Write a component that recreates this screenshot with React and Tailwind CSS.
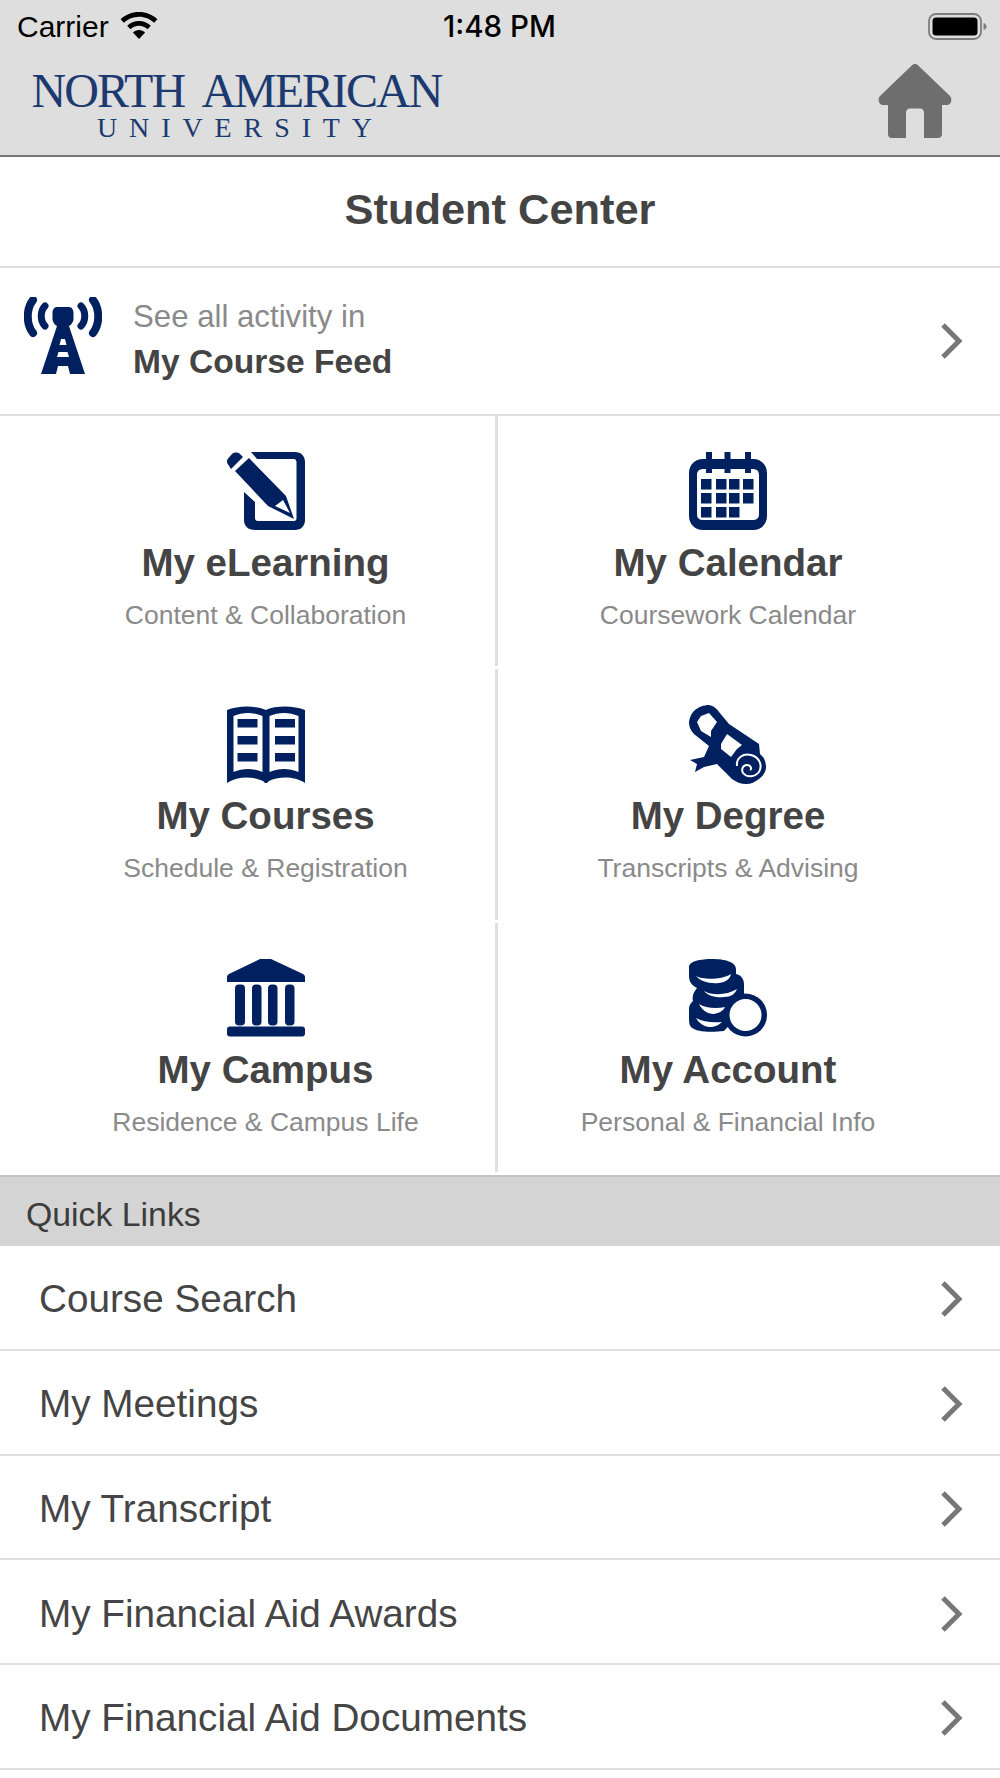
const NAVY = "#00205f";

function Chevron() {
  return (
    <svg width="24" height="38" viewBox="0 0 24 38" className="shrink-0">
      <path d="M4 3 L20 19 L4 35" fill="none" stroke="#777777" strokeWidth="5" strokeLinejoin="miter" />
    </svg>
  );
}

function Wifi() {
  return (
    <svg width="38" height="28" viewBox="0 0 38 28">
      <path d="M19 0C11.800 0 5.400 2.700 0.600 7.200l3.300 3.500C7.900 7 13.200 4.700 19 4.700S30.100 7 34.100 10.700l3.300-3.500C32.600 2.700 26.200 0 19 0Z" fill="#000" />
      <path d="M19 9C14.400 9 10.300 10.800 7.200 13.700l3.300 3.500C12.700 15.100 15.700 13.800 19 13.800s6.300 1.300 8.500 3.400l3.300-3.500C27.700 10.800 23.600 9 19 9Z" fill="#000" />
      <path d="M19 18c-2.300 0-4.500 .9-6.100 2.500L19 27l6.100-6.500C23.500 18.900 21.300 18 19 18Z" fill="#000" />
    </svg>
  );
}

function Battery() {
  return (
    <svg width="59" height="27" viewBox="0 0 59 27">
      <rect x="1" y="1" width="52" height="25" rx="7" fill="none" stroke="#7d7d7d" strokeWidth="1.800" />
      <rect x="4.500" y="4.500" width="45" height="18" rx="3.500" fill="#000" />
      <path d="M55.500 10c2 .5 3 2 3 3.500s-1 3-3 3.500Z" fill="#7d7d7d" />
    </svg>
  );
}

function Home() {
  return (
    <svg width="74" height="74" viewBox="0 0 74 74">
      <path d="M37 0 C38.500 0 39.500 .7 40.500 1.700 L72 32 C74.500 34.500 73.500 41 69 41 H64 V70 C64 72.500 62.500 74 60 74 H46 V49 C46 46 44.500 44.500 42 44.500 H32 C29.500 44.500 28 46 28 49 V74 H14 C11.500 74 10 72.500 10 70 V41 H5 C.5 41 -.5 34.500 2 32 L33.500 1.700 C34.500 .7 35.500 0 37 0 Z" fill="#6e6e6e" />
    </svg>
  );
}

function Tower() {
  return (
    <svg width="78" height="78" viewBox="0 0 78 78" fill={NAVY}>
      <path d="M33 10H45C48 10 49.500 13 49.500 16V22C49.500 25 47 28 45 29L61 77H46L44 69H34L32 77H17L33 29C31 28 28.500 25 28.500 22V16C28.500 13 30 10 33 10Z" />
      <path d="M37 42h4l1.500 6h-7Z" fill="#fff" />
      <path d="M34.500 55h9l1.500 5H33Z" fill="#fff" />
      <g fill="none" stroke={NAVY} strokeLinecap="round">
        <path d="M9 3C2 12 2 27 9 36" strokeWidth="8" />
        <path d="M69 3C76 12 76 27 69 36" strokeWidth="8" />
        <path d="M21 9C16 14 16 24 21 29" strokeWidth="7" />
        <path d="M57 9C62 14 62 24 57 29" strokeWidth="7" />
      </g>
    </svg>
  );
}

function Pencil() {
  return (
    <svg width="78" height="78" viewBox="0 0 78 78" fill={NAVY}>
      <path d="M24 0H68C74 0 78 4 78 10V68C78 74 74 78 68 78H28C21 78 17 74 17 68V40L28 50V66C28 68 29 69 31 69H67C68.500 69 69.500 68 69.500 66.500V10C69.500 8.500 68.500 7 67 7H30Z" />
      <path d="M1.500 6 L5 2 C7 0 11 0 13 2 L16 5 L4 17 L1.500 13 C-0.500 11 -0.500 8 1.500 6 Z" />
      <path d="M22 6 L59 44 L67 67 L41 54 L8 19 Z" />
      <path d="M56 48 L48 54 L63 61 Z" fill="#fff" />
    </svg>
  );
}

function Calendar() {
  const cells = [];
  const xs = [12, 27, 40, 54];
  const ys = [27, 41, 55];
  ys.forEach((y, r) =>
    xs.forEach((x, c) => {
      if (r === 2 && c === 3) return;
      cells.push(<rect key={`${r}-${c}`} x={x} y={y} width="10.500" height="10.500" />);
    })
  );
  return (
    <svg width="78" height="78" viewBox="0 0 78 78" fill={NAVY}>
      <path fillRule="evenodd" d="M14 7H64C72 7 78 13 78 21V64C78 72 72 78 64 78H14C6 78 0 72 0 64V21C0 13 6 7 14 7ZM15 17C10 17 8 19 8 23V62C8 66 10 68 15 68H63C68 68 70 66 70 62V23C70 19 68 17 63 17Z" />
      <rect x="17" y="0" width="6" height="21" />
      <rect x="35.500" y="0" width="6" height="21" />
      <rect x="56" y="0" width="6" height="21" />
      {cells}
    </svg>
  );
}

function Book() {
  return (
    <svg width="78" height="78" viewBox="0 0 78 78" fill={NAVY}>
      <path fillRule="evenodd" d="M0 5C10 1 28 0 39 5C50 0 68 1 78 5V78C66 70 50 72 42 76L40 78H38L36 76C28 72 12 70 0 78ZM6.500 11V67C16 63 26 63 35.500 67V11C26 7 16 7 6.500 11ZM42.500 11V67C52 63 62 63 71.500 67V11C62 7 52 7 42.500 11Z" />
      <rect x="10.500" y="14" width="20" height="8.500" />
      <rect x="10.500" y="31" width="20" height="8.500" />
      <rect x="10.500" y="48" width="20" height="8.500" />
      <rect x="48" y="14" width="20" height="8.500" />
      <rect x="48" y="31" width="20" height="8.500" />
      <rect x="48" y="48" width="20" height="8.500" />
    </svg>
  );
}

function Scroll() {
  return (
    <svg width="78" height="80" viewBox="0 0 78 80" fill={NAVY}>
      <path fillRule="evenodd" d="M0 17C1 11 3 8 5 6C9 2 15 0 20 0C25 1 28 4 30 7L40 19L70 39L71 49C75 52 77 57 77 62C77 67 74 71 70 74C66 77 62 79 57 79C52 79 47 77 43 74L28 59L15 62L6 67L8 59L1 55L15 52L20 41L5 29C1 25 0 21 0 17ZM12 11L20 8L28 17L22 26V32L12 26L8 17ZM38 29L53 40L48 44L42 52L32 44V39Z" />
      <path d="M48 61C47 53 54 48 62 50C70 52 74 60 70 67C66 72 58 73 54 68C52 64 54 60 58 60C62 60 63 64 61 65" fill="none" stroke="#fff" strokeWidth="2" />
    </svg>
  );
}

function Museum() {
  return (
    <svg width="78" height="78" viewBox="0 0 78 78" fill={NAVY}>
      <path d="M33 0H44L76 15C77.500 16 78 17 78 18V23H0V18C0 17 .5 16 2 15Z" />
      <rect x="8" y="25.500" width="10" height="41" rx="4" />
      <rect x="25" y="25.500" width="9.500" height="41" rx="4" />
      <rect x="41" y="25.500" width="9.500" height="41" rx="4" />
      <rect x="58" y="25.500" width="9.500" height="41" rx="4" />
      <rect x="0" y="67.500" width="78" height="10" rx="3" />
    </svg>
  );
}

function Coins() {
  return (
    <svg width="78" height="78" viewBox="0 0 78 78" fill={NAVY}>
      <path d="M0 8C0 2 12 0 23 0C36 0 47 3 47 10V15C52 16 55 20 55 25V50L35 72C25 73 8 74 2 68C0 66 0 62 0 58V50C0 46 2 44 4 42C3 38 4 34 8 29C2 26 0 22 0 17Z" />
      <path d="M7 17C14 21 32 21 42 15C41 20 37 23 30 24C20 25 11 22 7 17Z" fill="#fff" />
      <path d="M15 32C24 37 38 36 48 30C46 35 42 38 35 38C27 39 19 37 15 32Z" fill="#fff" />
      <path d="M10 45C16 49 27 50 36 48C34 52 30 54 25 55C18 55 13 51 10 45Z" fill="#fff" />
      <path d="M7 59C14 63 24 64 33 63C30 66 26 68 20 68C14 67 10 64 7 59Z" fill="#fff" />
      <circle cx="56.500" cy="56" r="21.500" />
      <circle cx="56.500" cy="56" r="16" fill="#fff" />
    </svg>
  );
}

function Tile({ icon, title, sub, right, height }) {
  return (
    <div className={`flex ${height}`}>
      <div className={`flex flex-col items-center flex-1 ${right ? "pr-[42px]" : "pl-[36px]"}`}>
        <div className="pt-[36px] h-[114px]">{icon}</div>
        <div className="mt-[11px] text-[38.500px] leading-[44px] font-bold text-[#444444] whitespace-nowrap">{title}</div>
        <div className="mt-[15px] text-[26.500px] leading-[30px] text-[#8a8a8a] whitespace-nowrap">{sub}</div>
      </div>
      {right ? null : <div className="w-[3px] mb-[3px] bg-[#e0e0e0]" />}
    </div>
  );
}

function LinkRow({ label }) {
  return (
    <div className="flex items-center justify-between h-[104.750px] pt-[4px] pl-[39px] pr-[37px] border-b-2 border-[#dfdfdf]">
      <span className="text-[38.700px] text-[#454545]">{label}</span>
      <Chevron />
    </div>
  );
}

export default function App() {
  return (
    <div className="w-[1000px] h-[1778px] overflow-hidden bg-white" style={{ fontFamily: '"Liberation Sans", Arial, sans-serif' }}>
      <div className="h-[157px] bg-[#dedede] border-b-2 border-[#777777]">
        <div className="relative flex items-center justify-between h-[50px] pt-[2px] pl-[17px] pr-[13px]">
          <div className="flex items-center gap-[11px] text-[30px] text-black">
            <span>Carrier</span>
            <Wifi />
          </div>
          <span className="absolute left-[443px] text-[29.500px] font-medium text-black" style={{ fontFamily: 'Inter, sans-serif' }}>1:48 PM</span>
          <Battery />
        </div>
        <div className="flex items-start justify-between pl-[33px] pr-[48px]">
          <div className="pt-[19px] flex flex-col items-center w-[407px]" style={{ fontFamily: '"Liberation Serif", serif' }}>
            <div className="text-[48px] leading-[44px] text-[#1c3a70] whitespace-nowrap tracking-[-2px] [word-spacing:10px]">NORTH AMERICAN</div>
            <div className="mt-[1px] text-[28px] leading-[28px] text-[#1c3a70] whitespace-nowrap tracking-[11.900px] pl-[8px]">UNIVERSITY</div>
          </div>
          <div className="pt-[14px]"><Home /></div>
        </div>
      </div>

      <div className="flex items-center justify-center h-[111px] pb-[4px] border-b-2 border-[#dfdfdf] text-[43.400px] font-bold text-[#444444]">
        Student Center
      </div>

      <div className="flex items-center h-[148px] pl-[24px] pr-[37px] border-b-2 border-[#dfdfdf]">
        <div className="pb-[10px]"><Tower /></div>
        <div className="ml-[31px] flex-1 pb-[4px]">
          <div className="text-[31.200px] leading-[45px] text-[#8a8a8a]">See all activity in</div>
          <div className="text-[33.600px] leading-[45px] font-bold text-[#444444]">My Course Feed</div>
        </div>
        <Chevron />
      </div>

      <div className="grid grid-cols-[498px_502px]">
        <Tile height="h-[253px]" icon={<Pencil />} title="My eLearning" sub="Content & Collaboration" />
        <Tile height="h-[253px]" right icon={<Calendar />} title="My Calendar" sub="Coursework Calendar" />
        <Tile height="h-[254px]" icon={<Book />} title="My Courses" sub="Schedule & Registration" />
        <Tile height="h-[254px]" right icon={<Scroll />} title="My Degree" sub="Transcripts & Advising" />
        <Tile height="h-[252px]" icon={<Museum />} title="My Campus" sub="Residence & Campus Life" />
        <Tile height="h-[252px]" right icon={<Coins />} title="My Account" sub="Personal & Financial Info" />
      </div>

      <div className="flex items-center h-[71px] pt-[5px] pl-[26px] bg-[#d4d4d4] border-t-2 border-[#c4c4c4] text-[33.800px] text-[#3c3c3c]">
        Quick Links
      </div>

      <LinkRow label="Course Search" />
      <LinkRow label="My Meetings" />
      <LinkRow label="My Transcript" />
      <LinkRow label="My Financial Aid Awards" />
      <LinkRow label="My Financial Aid Documents" />
    </div>
  );
}
